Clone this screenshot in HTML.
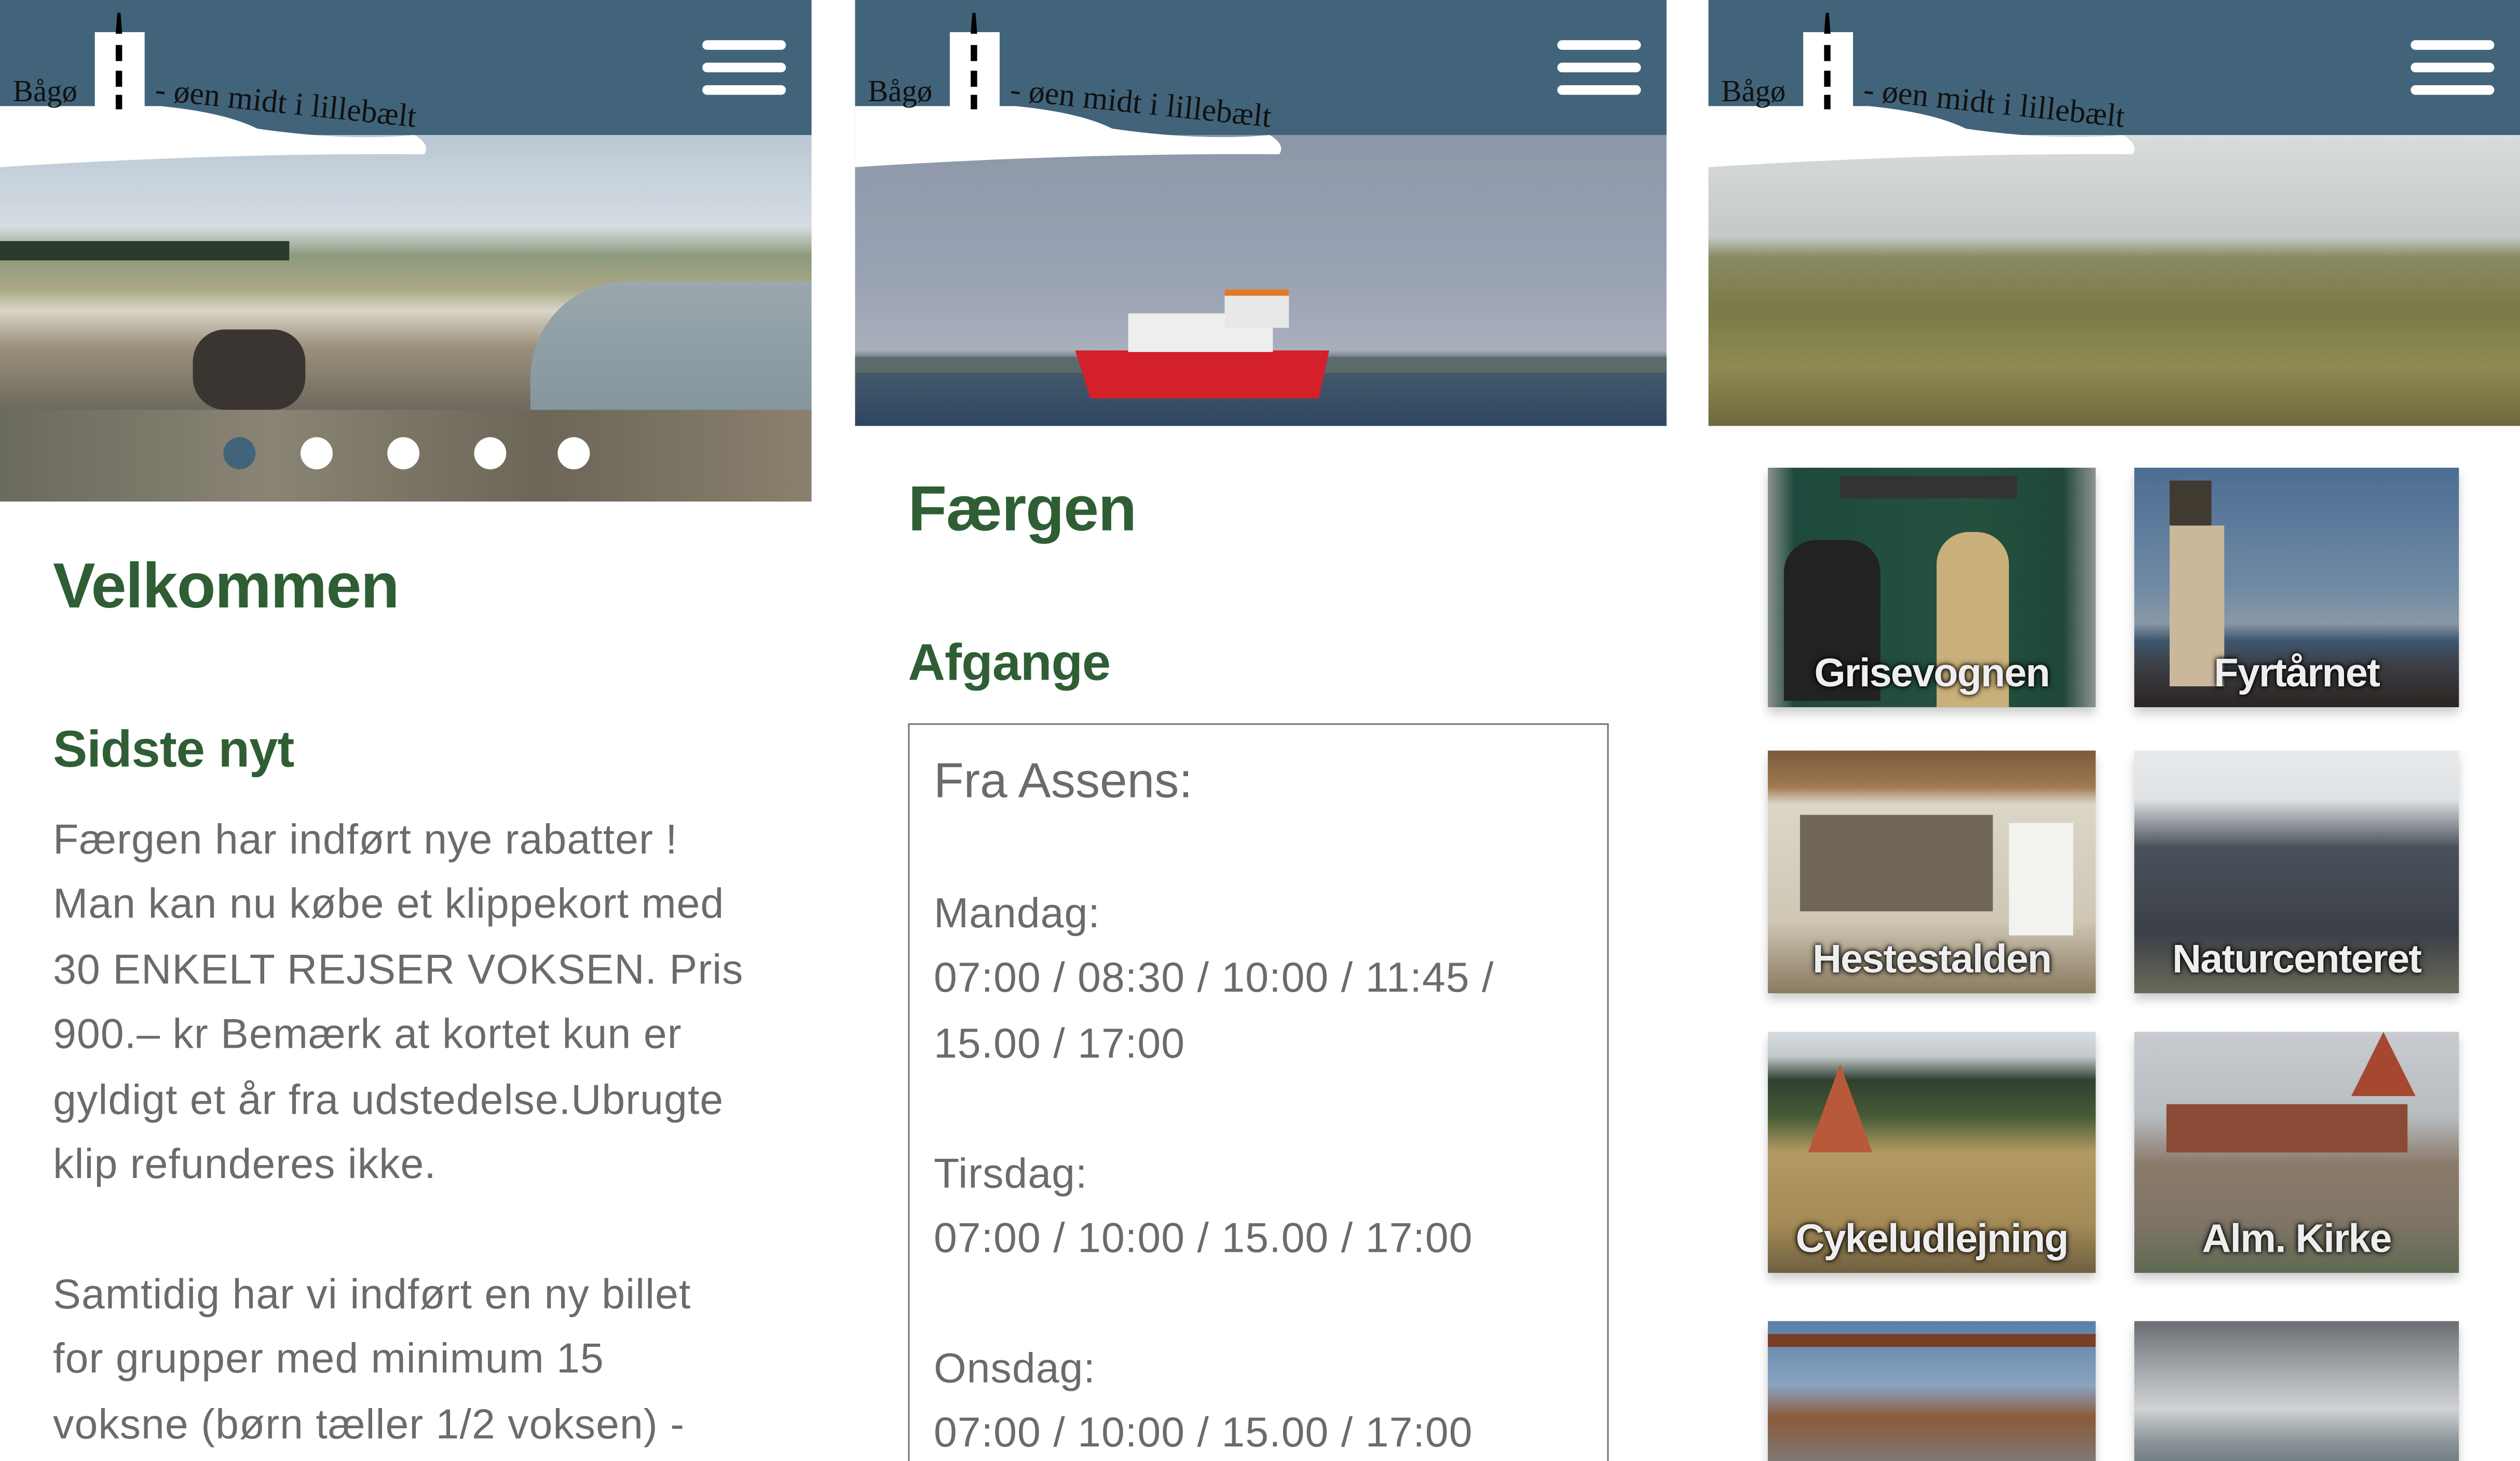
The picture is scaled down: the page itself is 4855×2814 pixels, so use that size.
<!DOCTYPE html>
<html><head><meta charset="utf-8">
<style>
html,body{margin:0;padding:0;background:#fff;overflow:hidden}
body{width:4855px;height:2814px}
#w{position:absolute;left:0;top:0;width:1568px;height:909px;transform:scale(3.0963,3.0957);transform-origin:0 0;font-family:"Liberation Sans",sans-serif;overflow:hidden}
.p{position:absolute;top:0;height:909px;overflow:hidden;background:#fff}
.ph{position:absolute;left:0;top:84px;width:505px}
h1{position:absolute;margin:0;color:#2f5e34;font-weight:bold;font-size:39.5px;letter-spacing:-0.5px}
h2{position:absolute;margin:0;color:#2f5e34;font-weight:bold;font-size:32px;letter-spacing:-0.3px}
.tx{position:absolute;color:#6b6b6b;font-size:26px;line-height:40.4px;letter-spacing:0.35px;white-space:nowrap}
.t{position:absolute;width:204px;height:149px;box-shadow:0 4px 6px rgba(0,0,0,.2);overflow:hidden}
.t span{position:absolute;left:0;right:0;bottom:6px;text-align:center;color:#eee;font-weight:bold;font-size:25px;text-shadow:0 0 4px #000,0 0 2px #000;letter-spacing:-0.6px}
.dot{position:absolute;top:272px;width:20px;height:20px;border-radius:50%;background:#fff}
</style></head><body><div id="w">

<div class="p" style="left:0;width:505px">
 <div class="ph" style="height:228px;background:linear-gradient(180deg,#b9c7d3 0%,#d6dde3 25%,#8c9a7c 33%,#a9a884 42%,#d9d5c8 48%,#9b8f7a 58%,#6e6a5e 75%,#5f6255 100%)"></div>
 <div style="position:absolute;left:330px;top:175px;width:175px;height:100px;background:linear-gradient(180deg,#9aa8ad,#7f9199);border-radius:60px 0 0 0"></div>
 <div style="position:absolute;left:0;top:150px;width:180px;height:12px;background:#2b3a2a"></div>
 <div style="position:absolute;left:120px;top:205px;width:70px;height:50px;background:#3a3530;border-radius:20px"></div>
 <div style="position:absolute;left:0;top:255px;width:505px;height:57px;background:linear-gradient(90deg,#6a6a5e,#8a8474,#6c6658,#8a806e)"></div>
 <div class="dot" style="left:139px;background:#41647a"></div>
 <div class="dot" style="left:187px"></div>
 <div class="dot" style="left:241px"></div>
 <div class="dot" style="left:295px"></div>
 <div class="dot" style="left:347px"></div>
 <h1 style="left:33px;top:343px">Velkommen</h1>
 <h2 style="left:33px;top:448px">Sidste nyt</h2>
 <div class="tx" style="left:33px;top:502px">Færgen har indført nye rabatter !<br>Man kan nu købe et klippekort med<br>30 ENKELT REJSER VOKSEN. Pris<br>900.– kr Bemærk at kortet kun er<br>gyldigt et år fra udstedelse.Ubrugte<br>klip refunderes ikke.<br><br>Samtidig har vi indført en ny billet<br>for grupper med minimum 15<br>voksne (børn tæller 1/2 voksen) -</div>
</div>

<div class="p" style="left:532px;width:505px">
 <div class="ph" style="height:181px;background:linear-gradient(180deg,#8c97a8 0%,#9aa3b4 50%,#a9afbb 74%,#4a5c6e 78%,#2d4660 100%)"></div>
 <div style="position:absolute;left:0;top:222px;width:505px;height:10px;background:#5b6a6a"></div>
 <div style="position:absolute;left:137px;top:218px;width:158px;height:30px;background:#d4202a;clip-path:polygon(0 0,100% 0,96% 100%,6% 100%)"></div>
 <div style="position:absolute;left:170px;top:195px;width:90px;height:24px;background:#eee"></div>
 <div style="position:absolute;left:230px;top:180px;width:40px;height:20px;background:#e8e8e8;border-top:4px solid #e07a2a"></div>
 <h1 style="left:33px;top:295px">Færgen</h1>
 <h2 style="left:33px;top:394px">Afgange</h2>
 <div style="position:absolute;left:33px;top:450px;width:436px;height:470px;border:1.5px solid #777;box-sizing:border-box"></div>
 <div class="tx" style="left:49px;top:466px;font-size:30.5px;line-height:40px;letter-spacing:0">Fra Assens:</div>
 <div class="tx" style="left:49px;top:548px">Mandag:<br>07:00 / 08:30 / 10:00 / 11:45 /<br>15.00 / 17:00<br><br>Tirsdag:<br>07:00 / 10:00 / 15.00 / 17:00<br><br>Onsdag:<br>07:00 / 10:00 / 15.00 / 17:00</div>
</div>

<div class="p" style="left:1063px;width:505px">
 <div class="ph" style="height:181px;background:linear-gradient(180deg,#d9dcdc 0%,#c4c9c6 35%,#8a8a62 42%,#7a7a48 60%,#8e8a52 80%,#6f6a3e 100%)"></div>
 <div class="t" style="left:37px;top:291px;background:linear-gradient(90deg,#8a9290 0%,#1e4a3e 8%,#24513f 60%,#1f4738 90%,#8e9590 100%)"><div style="position:absolute;left:45px;top:5px;width:110px;height:14px;background:#333"></div><div style="position:absolute;left:10px;top:45px;width:60px;height:100px;background:#222;border-radius:20px 20px 0 0"></div><div style="position:absolute;left:105px;top:40px;width:45px;height:110px;background:#c9b07a;border-radius:20px 20px 0 0"></div><span>Grisevognen</span></div>
 <div class="t" style="left:265px;top:291px;width:202px;background:linear-gradient(180deg,#4c6d93 0%,#6f8aa4 50%,#8a98a6 65%,#3f5870 72%,#3d4048 82%,#2a2420 100%)"><div style="position:absolute;left:22px;top:8px;width:26px;height:30px;background:#403a30"></div><div style="position:absolute;left:22px;top:36px;width:34px;height:100px;background:#cbb89c"></div><span>Fyrtårnet</span></div>
 <div class="t" style="left:37px;top:467px;height:151px;background:linear-gradient(180deg,#7a5a3a 0%,#a07a50 15%,#dcd6c8 22%,#cfc7b4 70%,#8a7a60 100%)"><div style="position:absolute;left:20px;top:40px;width:120px;height:60px;background:#6f6656"></div><div style="position:absolute;left:150px;top:45px;width:40px;height:70px;background:#f2f2ee"></div><span>Hestestalden</span></div>
 <div class="t" style="left:265px;top:467px;width:202px;height:151px;background:linear-gradient(180deg,#e8eaec 0%,#dfe2e4 20%,#4a505a 40%,#3b4048 75%,#6a6a5a 100%)"><span>Naturcenteret</span></div>
 <div class="t" style="left:37px;top:642px;height:150px;background:linear-gradient(180deg,#d7dce0 0%,#c4c9cc 10%,#2f4030 20%,#465a36 35%,#b39a62 50%,#a48a56 80%,#6e6042 100%)"><div style="position:absolute;left:25px;top:20px;width:40px;height:55px;background:#b85a3a;clip-path:polygon(50% 0,100% 100%,0 100%)"></div><span>Cykeludlejning</span></div>
 <div class="t" style="left:265px;top:642px;width:202px;height:150px;background:linear-gradient(180deg,#c8ccd0 0%,#b7bcc0 35%,#8a7a6a 55%,#7e7466 80%,#5e6a52 100%)"><div style="position:absolute;left:135px;top:0;width:40px;height:40px;background:#a5482f;clip-path:polygon(50% 0,100% 100%,0 100%)"></div><div style="position:absolute;left:20px;top:45px;width:150px;height:30px;background:#8a4a36"></div><span>Alm. Kirke</span></div>
 <div class="t" style="left:37px;top:822px;height:100px;background:linear-gradient(180deg,#5a7ea8,#8aa4c0 40%,#8a5a3a 60%,#7a8690)"><div style="position:absolute;left:0;top:8px;width:204px;height:8px;background:#7a3e24"></div></div>
 <div class="t" style="left:265px;top:822px;width:202px;height:100px;background:linear-gradient(180deg,#6a6e72,#a4a8ac 30%,#d0d2d4 55%,#8a9498 75%,#5e6a70)"></div>
</div>

<svg width="0" height="0" style="position:absolute"><defs>
<g id="lg">
 <rect x="0" y="0" width="505" height="84" fill="#41647a"/>
 <rect x="437" y="25" width="52" height="6" rx="3" fill="#fff"/>
 <rect x="437" y="39" width="52" height="6" rx="3" fill="#fff"/>
 <rect x="437" y="53" width="52" height="6" rx="3" fill="#fff"/>
 <path d="M0 66 L100 66 Q140 70 160 80 Q215 88 258 84 Q268 90 264 96 Q140 95 0 104 Z" fill="#fff"/>
 <rect x="59" y="20" width="31" height="48" fill="#fff"/>
 <path d="M72 21 L73 8 L75 8 L76 21 Z" fill="#000"/>
 <rect x="72" y="28" width="4" height="10" fill="#000"/>
 <rect x="72" y="44" width="4" height="10" fill="#000"/>
 <rect x="72" y="59" width="4" height="9" fill="#000"/>
 <text x="8" y="63" font-family="Liberation Serif" font-size="19" fill="#111">Bågø</text>
 <text x="96" y="62" font-family="Liberation Serif" font-size="20" fill="#111" transform="rotate(6 96 62)">- øen midt i lillebælt</text>
</g></defs></svg>
<svg style="position:absolute;left:0;top:0" width="505" height="110"><use href="#lg"/></svg>
<svg style="position:absolute;left:532px;top:0" width="505" height="110"><use href="#lg"/></svg>
<svg style="position:absolute;left:1063px;top:0" width="505" height="110"><use href="#lg"/></svg>

</div></body></html>
